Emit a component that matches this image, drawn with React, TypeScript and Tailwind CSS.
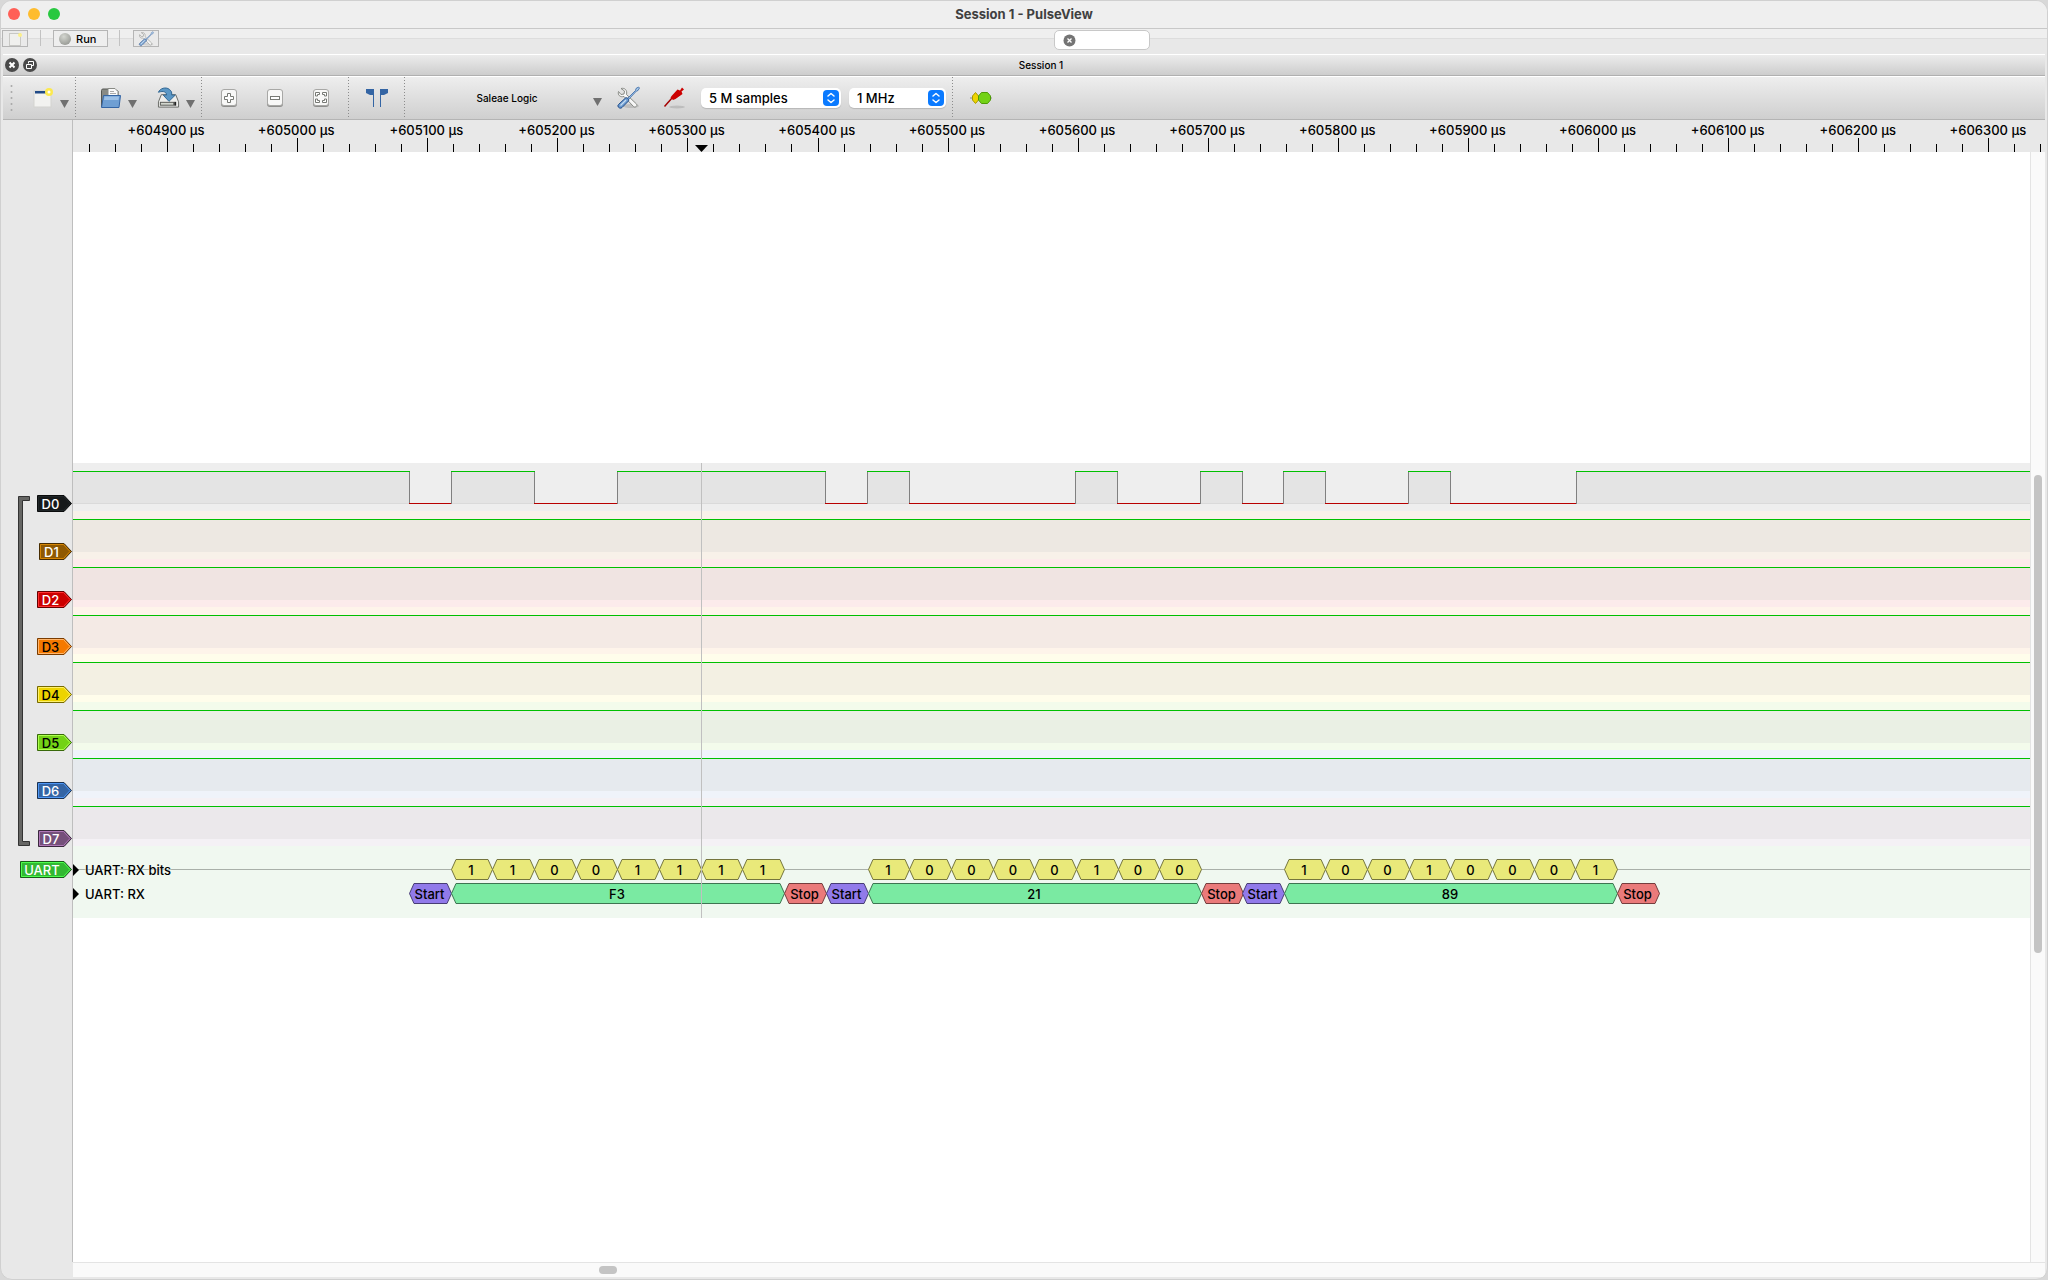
import React from "react";

const ORIGIN_X = 73;

type Lane = { name: string; fill: string; edge: string; glow: string; wide: number; height: string; bg: string; area: string; text: string };

const lanes: Lane[] = [
  { name: "D0", fill: "#16191a", edge: "#0b0c0d", glow: "#202628", wide: 35, height: "h-12", bg: "bg-[#eeeeee]", area: "bg-[#e4e4e4]", text: "text-white" },
  { name: "D1", fill: "#8f5902", edge: "#472c01", glow: "#d68503", wide: 33, height: "h-12", bg: "bg-[#f8f1e9]", area: "bg-[#ede8e2]", text: "text-white" },
  { name: "D2", fill: "#cc0000", edge: "#660000", glow: "#ff3232", wide: 35, height: "h-12", bg: "bg-[#fcebeb]", area: "bg-[#f0e4e2]", text: "text-white" },
  { name: "D3", fill: "#f57900", edge: "#7a3c00", glow: "#ffb56b", wide: 35, height: "h-[47px]", bg: "bg-[#fef4ea]", area: "bg-[#f4eae5]", text: "text-black" },
  { name: "D4", fill: "#edd400", edge: "#766a00", glow: "#fff06b", wide: 35, height: "h-12", bg: "bg-[#fffdeb]", area: "bg-[#f3f0e3]", text: "text-black" },
  { name: "D5", fill: "#73d216", edge: "#39690b", glow: "#acff4d", wide: 35, height: "h-12", bg: "bg-[#f3fbeb]", area: "bg-[#eaf0e4]", text: "text-black" },
  { name: "D6", fill: "#3465a4", edge: "#1a3252", glow: "#4e97f6", wide: 35, height: "h-12", bg: "bg-[#eff3fa]", area: "bg-[#e6eaee]", text: "text-white" },
  { name: "D7", fill: "#75507b", edge: "#3a283d", glow: "#b078b8", wide: 34, height: "h-12", bg: "bg-[#f4f1f5]", area: "bg-[#ebe8eb]", text: "text-white" },
];

const edges = [409, 451, 534, 617, 825, 867, 909, 1075, 1117, 1200, 1242, 1283, 1325, 1408, 1450, 1576];

const frames = [
  { start: 409, bits: "11001111", value: "F3" },
  { start: 826, bits: "10000100", value: "21" },
  { start: 1242, bits: "10010001", value: "89" },
];

const BIT = 41.65;

function Tag({ name, wide, fill, edge, glow, text }: { name: string; wide: number; fill: string; edge: string; glow: string; text: string }) {
  const tip = wide - 8;
  return (
    <button type="button" className={`relative flex h-[17px] items-center pr-2 text-[13px] leading-4 font-medium ${text}`} style={{ width: wide }}>
      <svg className="absolute inset-0" width={wide} height="17" aria-hidden="true">
        <path d={`M.5 .5H${tip}L${wide - 0.5} 8.5L${tip} 16.5H.5Z`} fill={fill} stroke={edge} />
        <path d={`M1.5 1.5H${tip - 0.5}L${wide - 2} 8.5L${tip - 0.5} 15.5H1.5Z`} fill="none" stroke={glow} />
      </svg>
      <span className="relative w-full text-center">{name}</span>
    </button>
  );
}

function Annotation({ from, to, label, fill, edge }: { from: number; to: number; label: string; fill: string; edge: string }) {
  const x0 = Math.round(from);
  const w = Math.round(to) - x0 + 1;
  return (
    <div className="absolute top-0 flex h-[21px] items-center justify-center pr-0.5 text-[13px] leading-5 font-medium text-black" style={{ left: x0 - ORIGIN_X, width: w }}>
      <svg className="absolute inset-0" width={w} height="21" aria-hidden="true">
        <path d={`M.5 10.5L5 .5H${w - 5}L${w - 0.5} 10.5L${w - 5} 20.5H5Z`} fill={fill} stroke={edge} />
      </svg>
      <span className="relative">{label}</span>
    </div>
  );
}

function Ruler() {
  const ticks: React.ReactNode[] = [];
  for (let i = -3; i <= 72; i++) {
    const x = Math.round(94 + i * 26.02);
    ticks.push(<rect key={i} x={x} y={i % 5 === 0 ? 18 : 24} width="1" height={i % 5 === 0 ? 14 : 8} fill="#000" />);
  }
  return (
    <div className="relative h-8 min-w-0 flex-1 overflow-hidden">
      <div className="ml-7 grid w-[1952px] grid-cols-15 text-center text-[13px] leading-5 font-medium text-black">
        {Array.from({ length: 15 }, (_, i) => (
          <span key={i}>+{604900 + i * 100} µs</span>
        ))}
      </div>
      <svg className="absolute inset-0 h-8 w-full" shapeRendering="crispEdges" aria-hidden="true">
        {ticks}
        <path d="M622 25H635L628.500 32Z" fill="#000" shapeRendering="auto" />
      </svg>
    </div>
  );
}

function D0Wave() {
  const levels: React.ReactNode[] = [];
  const all = [ORIGIN_X, ...edges, 2600];
  for (let i = 0; i < all.length - 1; i++) {
    const a = all[i] - ORIGIN_X;
    const w = all[i + 1] - all[i] + 1;
    if (i % 2 === 0) {
      levels.push(<rect key={i} x={a} y="8" width={w} height="33" fill="#e4e4e4" />);
      levels.push(<rect key={`b${i}`} x={a} y="40" width={w} height="1" fill="#dadada" />);
      levels.push(<rect key={`h${i}`} x={a} y="8" width={w} height="1" fill="#00c000" />);
    }
  }
  for (let i = 1; i < all.length - 1; i++) {
    levels.push(<rect key={`e${i}`} x={all[i] - ORIGIN_X} y="9" width="1" height="32" fill="#808080" />);
    if (i % 2 === 1) levels.push(<rect key={`l${i}`} x={all[i] - ORIGIN_X} y="40" width={all[i + 1] - all[i] + 1} height="1" fill="#b80000" />);
  }
  return (
    <svg className="block h-12 w-full" shapeRendering="crispEdges" role="img" aria-label="D0 signal">
      {levels}
    </svg>
  );
}

function Tools({ faded = false }: { faded?: boolean }) {
  return (
    <svg viewBox="0 0 24 24" className={faded ? "h-4 w-4 opacity-80" : "h-6 w-6"} aria-hidden="true">
      <ellipse cx="15" cy="20" rx="8" ry="2" fill="#000" opacity=".12" />
      <path d="M5 2.500L8.500 5L8 8L5 8.500L2.500 5.500C1.500 9 4 11.500 8 10.500L17.500 20.500C19 22 22 20 20.500 18L10.500 8.500C11.500 4.500 9 1.500 5 2.500Z" fill="#f6f6f6" stroke="#888a85" />
      <path d="M11 13L19.500 4.500L20 2.500L22.500 1L23.500 2L22 4.500L20.500 5L12 14Z" fill="#a8c8e8" stroke="#3465a4" strokeWidth=".8" />
      <path d="M9.500 12C11 11 13.500 13 12.500 15L6 21.500C4 23.500 .5 20.500 2.500 18.500Z" fill="#6b9bd0" stroke="#204a87" />
      <path d="M10 14L4.500 19.500" stroke="#c5dcf2" strokeWidth="1.300" />
    </svg>
  );
}

function Arrow() {
  return (
    <svg width="9" height="9" viewBox="0 0 9 9" className="shrink-0" aria-hidden="true">
      <path d="M0 0H9L4.500 8Z" fill="#707070" />
    </svg>
  );
}

function Separator() {
  return <div className="h-[42px] w-px shrink-0 bg-[repeating-linear-gradient(to_bottom,#8c8c8c_0px_1px,transparent_1px_3px)]" />;
}

function ZoomBox({ children, label }: { children: React.ReactNode; label: string }) {
  return (
    <button type="button" aria-label={label} className="shrink-0">
      <svg width="18" height="20" viewBox="0 0 18 20" aria-hidden="true">
        <rect x="1" y="2" width="16" height="17" rx="3" fill="#8e8e8c" />
        <rect x="1.500" y="1.500" width="15" height="16" rx="2.500" fill="#f8f8f7" stroke="#a8a8a6" />
        {children}
      </svg>
    </button>
  );
}

function Picker({ label, options, className }: { label: string; options: string[]; className: string }) {
  return (
    <div className={`relative flex shrink-0 ${className}`}>
      <select aria-label={label} className="h-5 w-full appearance-none rounded-[5px] bg-white pr-6 pl-2 text-[13px] leading-5 font-medium text-black shadow-[0_1px_1px_rgba(0,0,0,0.15)] outline-none">
        {options.map((o) => (
          <option key={o}>{o}</option>
        ))}
      </select>
      <svg className="pointer-events-none absolute top-[2px] right-[2px]" width="16" height="16" aria-hidden="true">
        <rect width="16" height="16" rx="4" fill="#0a7aff" />
        <path d="M5 6L8 3.500L11 6M5 10L8 12.500L11 10" fill="none" stroke="#fff" strokeWidth="1.500" strokeLinecap="round" strokeLinejoin="round" />
      </svg>
    </div>
  );
}

function MainToolbar() {
  return (
    <div className="flex h-[44px] items-center border-t border-b border-t-white border-b-[#b4b4b4] bg-gradient-to-b from-[#eeeeee] to-[#cfcfcf]">
      <div className="flex w-[72px] items-center pl-[7px]">
        <svg width="3" height="28" aria-hidden="true">
          {[2, 8, 14, 20, 26].map((y) => (
            <circle key={y} cx="1.500" cy={y} r="1" fill="#a8a8a8" />
          ))}
        </svg>
        <button type="button" aria-label="New session" className="ml-5 flex items-end gap-[7px]">
          <svg width="20" height="22" viewBox="0 0 20 22" aria-hidden="true">
            <rect x="1" y="4" width="17" height="16" fill="#f2f2f0" stroke="#d3d3d0" />
            <rect x="2" y="4" width="15" height="2.500" fill="#204a87" />
            <circle cx="16" cy="5" r="4" fill="#fce94f" />
            <circle cx="16" cy="5" r="1.500" fill="#fff" />
          </svg>
          <Arrow />
        </button>
      </div>
      <Separator />
      <div className="flex w-[125px] items-center gap-5 pl-6">
        <button type="button" aria-label="Open" className="flex items-end gap-[7px]">
          <svg width="21" height="22" viewBox="0 0 21 22" aria-hidden="true">
            <path d="M1.500 20V3.500Q1.500 2 3 2H8L9 4H18V12" fill="#888a85" stroke="#555753" />
            <path d="M8 10V1.500H15L18 4.500V10Z" fill="#fafafa" stroke="#888a85" />
            <path d="M10 4.500H14M10 6.500H16" stroke="#aaa" />
            <path d="M3.500 8.500H20.500L19 20.500H1.500Z" fill="#6f9fd3" stroke="#3465a4" />
            <path d="M4.500 9.500H19L18.500 13H4Z" fill="#9cc0e6" />
          </svg>
          <Arrow />
        </button>
        <button type="button" aria-label="Save" className="flex items-end gap-[6px]">
          <svg width="23" height="22" viewBox="0 0 24 22" aria-hidden="true">
            <path d="M4.500 7.500H19.500L22.500 15V20.500H1.500V15Z" fill="#eeeeec" stroke="#666864" />
            <rect x="3.500" y="15.500" width="14" height="3" fill="#d3d7cf" stroke="#555753" />
            <rect x="18" y="15" width="2" height="4" fill="#222" />
            <path d="M1.500 5C3 1 9 -1 13 2Q16 4 15.500 8H19L12.500 14.500L6.500 8H10C10 5 7 3 1.500 5Z" fill="#5b97c5" stroke="#2f6592" />
          </svg>
          <Arrow />
        </button>
      </div>
      <Separator />
      <div className="flex w-[146px] items-center gap-7 pl-[18px]">
        <ZoomBox label="Zoom in">
          <path d="M7.500 5.500H10.500V8.500H13.500V11.500H10.500V14.500H7.500V11.500H4.500V8.500H7.500Z" fill="#fff" stroke="#777974" />
        </ZoomBox>
        <ZoomBox label="Zoom out">
          <rect x="4.500" y="8.500" width="9" height="3" fill="#fff" stroke="#777974" />
        </ZoomBox>
        <ZoomBox label="Zoom to fit">
          <path d="M3.500 8V4.500H7.500V6.500H5.500V8ZM14.500 8V4.500H10.500V6.500H12.500V8ZM3.500 11V14.500H7.500V12.500H5.500V11ZM14.500 11V14.500H10.500V12.500H12.500V11Z" fill="#fff" stroke="#777974" />
        </ZoomBox>
      </div>
      <Separator />
      <div className="flex w-[55px] justify-center">
        <button type="button" aria-label="Show cursors">
          <svg width="22" height="18" viewBox="0 0 22 18" aria-hidden="true">
            <path d="M0 0H8V18H7V6H4L0 4Z" fill="#3465a4" />
            <path d="M22 0H14V18H15V6H18L22 4Z" fill="#3465a4" />
          </svg>
        </button>
      </div>
      <Separator />
      <button type="button" className="ml-[6px] flex w-[191px] items-center pl-[14px] text-[10px] leading-4 font-medium text-black">
        <span className="flex-1 pr-1 text-center">Saleae Logic</span>
        <span className="pt-2">
          <Arrow />
        </span>
      </button>
      <button type="button" aria-label="Configure device" className="ml-[14px] shrink-0">
        <Tools />
      </button>
      <button type="button" aria-label="Configure channels" className="ml-[22px] shrink-0">
        <svg width="24" height="24" viewBox="0 0 24 24" aria-hidden="true">
          <ellipse cx="15" cy="21" rx="8" ry="1.500" fill="#000" opacity=".12" />
          <path d="M2.500 20.500L10 12" stroke="#a40000" strokeWidth="1.500" />
          <path d="M8.500 11.500L10 9.500L15.500 3.500L18 4.500L20 1.500L22 3.500L19.500 5.500L20.500 8L13.500 13L11 14Z" fill="#cc0000" />
        </svg>
      </button>
      <Picker label="Number of samples" options={["5 M samples"]} className="ml-[15px] w-[140px]" />
      <Picker label="Sample rate" options={["1 MHz"]} className="ml-2 w-[97px]" />
      <div className="ml-[6px]">
        <Separator />
      </div>
      <button type="button" aria-label="Add protocol decoder" className="ml-[17px] shrink-0">
        <svg width="22" height="12" viewBox="0 0 22 12" aria-hidden="true">
          <path d="M0 6H22" stroke="#888a85" />
          <path d="M5.500 .5L8.500 4V8L5.500 11.500L2.500 8V4Z" fill="#edd400" stroke="#a89800" />
          <path d="M11.500 .5H17.500L20.500 4V8L17.500 11.500H11.500L8.500 8V4Z" fill="#73d216" stroke="#4e9a06" />
        </svg>
      </button>
    </div>
  );
}

export default function App() {
  return (
    <div className="min-h-screen bg-[#d8d8d8] font-[Inter,sans-serif]">
      <main className="flex min-h-screen flex-col overflow-hidden rounded-xl border border-[#d0d0d0] bg-[#e8e8e8]">
        <header className="flex h-7 items-center border-b border-[#c8c8c8] bg-[#efefef] px-[7px] pb-px">
          <div className="flex flex-1 gap-2">
            <button type="button" aria-label="Close window" className="h-3 w-3 rounded-full bg-[#ff5f57]" />
            <button type="button" aria-label="Minimize window" className="h-3 w-3 rounded-full bg-[#febc2e]" />
            <button type="button" aria-label="Zoom window" className="h-3 w-3 rounded-full bg-[#28c840]" />
          </div>
          <h1 className="text-[13px] leading-5 font-bold text-[#404040]">Session 1 - PulseView</h1>
          <div className="flex-1" />
        </header>

        <div className="flex h-[25px] items-start bg-[linear-gradient(#efefef_0_9px,#dddddd_9px_10px,#e8e8e8_10px)] pt-px pl-px">
          <button type="button" aria-label="New session tab" className="flex h-[17px] w-[26px] items-center justify-center border border-[#b5b5b5] bg-[#eaeaea]">
            <svg width="14" height="14" aria-hidden="true">
              <rect x="1.500" y="1.500" width="11" height="12" fill="#f0f0ee" stroke="#c8c8c5" />
              <circle cx="12" cy="3" r="2" fill="#fcf08a" />
            </svg>
          </button>
          <div className="ml-3 h-4 w-px bg-[#c2c2c2]" />
          <button type="button" className="ml-3 flex h-[17px] w-[55px] items-center gap-[5px] border border-[#b5b5b5] bg-[#eeeeee] pl-[5px] text-[11px] leading-4 font-medium text-black">
            <span className="h-3 w-3 rounded-full bg-[radial-gradient(circle_at_40%_30%,#d4d6d0,#888a85)]" />
            Run
          </button>
          <div className="ml-[11px] h-4 w-px bg-[#c2c2c2]" />
          <button type="button" aria-label="Settings" className="ml-[13px] flex h-[17px] w-[26px] items-center justify-center border border-[#b5b5b5] bg-[#eaeaea]">
            <Tools faded />
          </button>
          <label className="ml-[895px] flex h-5 w-24 items-center rounded-[5px] border border-[#c8c8c8] bg-white px-2">
            <svg width="13" height="13" viewBox="0 0 13 13" className="shrink-0" aria-hidden="true">
              <circle cx="6.500" cy="6.500" r="6" fill="#747474" />
              <path d="M4.500 4.500L8.500 8.500M8.500 4.500L4.500 8.500" stroke="#fff" strokeWidth="1.300" />
            </svg>
            <input type="text" aria-label="Search" className="w-full min-w-0 bg-transparent text-xs outline-none" />
          </label>
        </div>

        <section className="mr-[2px] ml-[2px] flex flex-1 flex-col">
          <div className="flex h-[22px] items-center border-t border-b border-t-white border-b-[#b0b0b0] bg-gradient-to-b from-[#ececec] to-[#cdcdcd] pl-[2px]">
            <div className="flex gap-1">
              <button type="button" aria-label="Close dock">
                <svg width="14" height="14" aria-hidden="true">
                  <circle cx="7" cy="7" r="7" fill="#4a4a4a" />
                  <path d="M4.500 4.500L9.500 9.500M9.500 4.500L4.500 9.500" stroke="#fff" strokeWidth="2" />
                </svg>
              </button>
              <button type="button" aria-label="Float dock">
                <svg width="14" height="14" aria-hidden="true">
                  <circle cx="7" cy="7" r="7" fill="#4a4a4a" />
                  <path d="M5.500 5.500V3.500H10.500V7.500H8.500M3.500 6.500H8.500V10.500H3.500Z" fill="none" stroke="#fff" />
                </svg>
              </button>
            </div>
            <h2 className="flex-1 text-center text-[10px] leading-4 font-medium text-black">Session 1</h2>
          </div>

          <MainToolbar />

          <div className="flex">
            <div className="h-8 w-[70px] shrink-0 border-r border-[#bebebe]" />
            <Ruler />
          </div>

          <div className="flex flex-1">
            <div className="w-[70px] shrink-0 border-r border-[#bebebe]">
              <div className="relative mt-[311px] flex flex-col">
                <svg className="absolute top-[33px] left-[15px]" width="13" height="350" aria-hidden="true">
                  <path d="M.5 .5H11.500V4.500H4.500V345.500H11.500V349.500H.5Z" fill="#666664" stroke="#333" />
                </svg>
                {lanes.map((l) => (
                  <div key={l.name} className={`flex items-end justify-end ${l.height}`}>
                    <div className="-mb-px">
                      <Tag name={l.name} wide={l.wide} fill={l.fill} edge={l.edge} glow={l.glow} text={l.text} />
                    </div>
                  </div>
                ))}
                <div className="flex justify-end pt-[15px]">
                  <Tag name="UART" wide={52} fill="#33b833" edge="#195c19" glow="#4dff4d" text="text-white" />
                </div>
              </div>
            </div>

            <div className="flex min-w-0 flex-1 flex-col bg-white">
              <div className="relative mt-[311px] overflow-hidden">
                {lanes.map((l, i) => (
                  <div key={l.name} className={`${l.height} ${l.bg}`}>
                    {i === 0 ? (
                      <D0Wave />
                    ) : (
                      <div className="pt-2">
                        <div className={`h-[33px] border-t border-t-[#00c000] ${l.area}`} />
                      </div>
                    )}
                  </div>
                ))}
                <div className="flex h-[72px] flex-col gap-[3px] bg-[#f0f8f0] pt-[13px]">
                  <div className="relative h-[21px]">
                    <div className="absolute inset-x-0 top-[10px] h-px bg-[#a9b0a9]" />
                    <div className="relative flex h-[21px] items-center gap-[6px] text-[13px] leading-5 font-medium text-black">
                      <svg width="6" height="12" aria-hidden="true">
                        <path d="M0 0L6 6L0 12Z" />
                      </svg>
                      <span className="[text-shadow:0_0_2px_#f0f8f0,0_0_2px_#f0f8f0]">UART: RX bits</span>
                    </div>
                    {frames.map((f) =>
                      f.bits.split("").map((b, i) => (
                        <Annotation key={`${f.value}${i}`} from={f.start + BIT * (i + 1)} to={f.start + BIT * (i + 2)} label={b} fill="#e9e97a" edge="#75753d" />
                      ))
                    )}
                  </div>
                  <div className="relative h-[21px]">
                    <div className="flex h-[21px] items-center gap-[6px] text-[13px] leading-5 font-medium text-black">
                      <svg width="6" height="12" aria-hidden="true">
                        <path d="M0 0L6 6L0 12Z" />
                      </svg>
                      <span>UART: RX</span>
                    </div>
                    {frames.map((f) => (
                      <React.Fragment key={f.value}>
                        <Annotation from={f.start} to={f.start + BIT} label="Start" fill="#917aea" edge="#483d75" />
                        <Annotation from={f.start + BIT} to={f.start + BIT * 9} label={f.value} fill="#7aeaa2" edge="#3d7551" />
                        <Annotation from={f.start + BIT * 9} to={f.start + BIT * 10} label="Stop" fill="#ea7a7a" edge="#753d3d" />
                      </React.Fragment>
                    ))}
                  </div>
                </div>
                <div className="absolute inset-y-0 left-[628px] w-px bg-[#c0c0c0]" />
              </div>
            </div>

            <div className="w-[15px] shrink-0 border-l border-[#e4e4e4] bg-[#fafafa] px-[3px] pt-[323px]">
              <div className="h-[478px] w-2 rounded-full bg-[#c4c4c4]" />
            </div>
          </div>

          <div className="ml-[70px] flex h-[15px] items-center border-t border-[#e4e4e4] bg-[#fafafa]">
            <div className="ml-[526px] h-2 w-[18px] rounded-full bg-[#c4c4c4]" />
          </div>
        </section>
        <div className="h-[2px]" />
      </main>
    </div>
  );
}
